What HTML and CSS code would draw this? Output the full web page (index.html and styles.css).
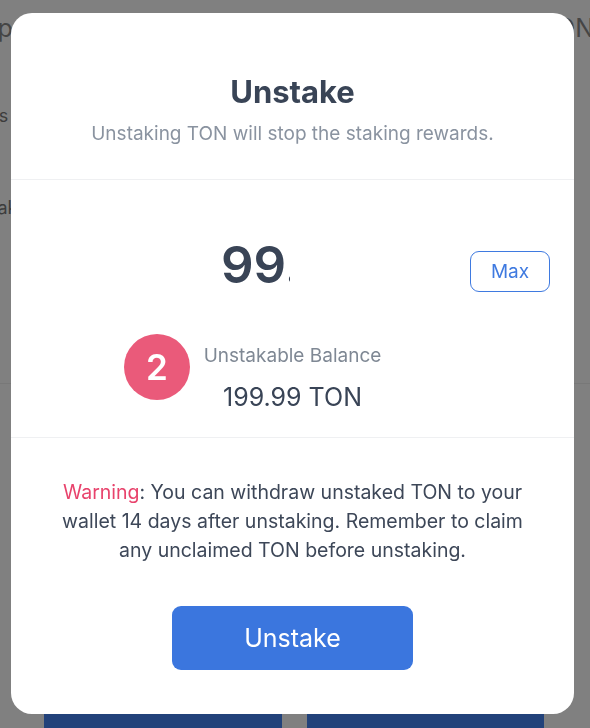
FILE: index.html
```html
<!DOCTYPE html>
<html lang="en">
<head>
<meta charset="utf-8">
<title>Unstake</title>
<link rel="stylesheet" href="styles.css">
</head>
<body>
<div class="page">
  <div class="bg-header">
    <span class="bg-title">Step</span>
    <span class="bg-title bg-right">TON</span>
  </div>
  <div class="bg-row bg-row1"><span>Basis</span></div>
  <div class="bg-row bg-row2"><span>Unstak</span></div>
  <div class="bg-rule"></div>
  <div class="bg-actions">
    <div class="bg-btn"></div>
    <div class="bg-btn"></div>
  </div>
</div>

<div class="modal">
  <section class="modal-head">
    <h1 class="title">Unstake</h1>
    <p class="subtitle">Unstaking TON will stop the staking rewards.</p>
  </section>
  <section class="modal-body">
    <div class="amount-row">
      <div class="amount">99.99</div>
      <button class="max-btn">Max</button>
    </div>
    <div class="balance">
      <div class="balance-label">Unstakable Balance</div>
      <div class="balance-value">199.99 TON</div>
      <span class="badge">2</span>
    </div>
  </section>
  <section class="modal-foot">
    <p class="warning"><span class="warn-word">Warning</span>: You can withdraw unstaked TON to your wallet 14 days after unstaking. Remember to claim any unclaimed TON before unstaking.</p>
    <button class="primary-btn">Unstake</button>
  </section>
</div>
</body>
</html>
```

FILE: styles.css
```css
* { box-sizing: border-box; }
html, body {
  margin: 0;
  padding: 0;
  width: 590px;
  height: 728px;
  overflow: hidden;
  background: #808080;
  font-family: Inter, "Noto Sans", "Liberation Sans", sans-serif;
}
.page {
  position: relative;
  height: 728px;
  display: flex;
  flex-direction: column;
}
.bg-header {
  display: flex;
  justify-content: space-between;
  padding-top: 12px;
  margin-left: -41px;
  margin-right: -4px;
  height: 50px;
}
.bg-title {
  font-size: 25px;
  color: #454545;
  line-height: 32px;
}
.bg-row {
  font-size: 18px;
  color: #3c3c3c;
  line-height: 24px;
  white-space: nowrap;
}
.bg-row1 { margin-top: 54px; margin-left: -37px; }
.bg-row2 { margin-top: 68px; margin-left: -42px; }
.bg-rule {
  margin-top: 163px;
  height: 1px;
  background: #787878;
}
.bg-actions {
  margin-top: auto;
  display: flex;
  gap: 25px;
  padding: 0 46px 0 44px;
}
.bg-btn {
  flex: 1;
  height: 16px;
  background: #22427a;
}

.modal {
  position: fixed;
  top: 13px;
  left: 11px;
  width: 563px;
  height: 701px;
  background: #ffffff;
  border-radius: 21px;
  display: flex;
  flex-direction: column;
  overflow: hidden;
}
.modal-head {
  padding: 60px 24px 32px;
  text-align: center;
  border-bottom: 1px solid #eff0f2;
}
.title {
  margin: 0;
  font-size: 31px;
  line-height: 38px;
  font-weight: 700;
  color: #394456;
}
.subtitle {
  margin: 10px 0 0;
  font-size: 19px;
  line-height: 26px;
  color: #8a93a0;
}
.modal-body {
  padding: 55px 24px 24px;
  border-bottom: 1px solid #eff0f2;
}
.amount-row {
  display: flex;
  align-items: flex-start;
  padding-left: 186px;
}
.amount {
  width: 69px;
  overflow: hidden;
  white-space: nowrap;
  font-size: 51px;
  line-height: 60px;
  font-weight: 600;
  color: #394456;
}
.max-btn {
  margin-left: auto;
  margin-top: 16px;
  width: 80px;
  height: 41px;
  border: 1.5px solid #3f7ae0;
  border-radius: 9px;
  background: #fff;
  color: #3f7ae0;
  font-family: inherit;
  font-size: 19px;
  padding: 0;
}
.balance {
  position: relative;
  margin-top: 48px;
  text-align: center;
}
.balance-label {
  font-size: 19px;
  line-height: 26px;
  color: #7f8894;
}
.balance-value {
  margin-top: 12px;
  font-size: 25px;
  line-height: 32px;
  color: #394456;
}
.badge {
  position: absolute;
  left: 89px;
  top: -9px;
  width: 66px;
  height: 66px;
  border-radius: 50%;
  background: #ea5a7a;
  color: #fff;
  font-size: 35px;
  font-weight: 600;
  display: flex;
  align-items: center;
  justify-content: center;
}
.modal-foot {
  padding: 40px 40px 44px;
  display: flex;
  flex-direction: column;
  align-items: center;
}
.warning {
  margin: 0;
  text-align: center;
  font-size: 19.5px;
  line-height: 29px;
  color: #3d4758;
}
.warn-word { color: #e8436c; }
.primary-btn {
  margin-top: 41px;
  width: 241px;
  height: 64px;
  border: none;
  border-radius: 9px;
  background: #3b76de;
  color: #fff;
  font-family: inherit;
  font-size: 25px;
  padding: 0;
}
```
